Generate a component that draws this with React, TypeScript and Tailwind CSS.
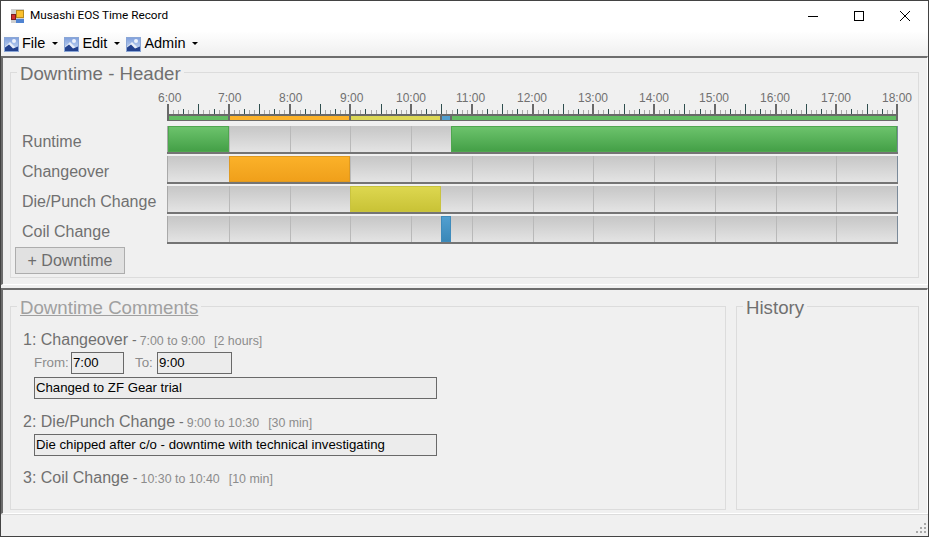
import React from 'react';

const HOUR_WIDTH = 60.75;
const START_HOUR = 6;
const HOURS = [6, 7, 8, 9, 10, 11, 12, 13, 14, 15, 16, 17, 18];
const COIL_END = 10 + 2 / 3;

const xOf = (time: number): number => Math.round((time - START_HOUR) * HOUR_WIDTH);

interface Segment {
  from: number;
  to: number;
  bar: string;
  flat: string;
}

const GREEN = 'bg-gradient-to-b from-[#6cc36c] to-[#44a047] border-[#4fa64f]';
const ORANGE = 'bg-gradient-to-b from-[#fbb129] to-[#f0a01a] border-[#e09a20]';
const YELLOW = 'bg-gradient-to-b from-[#ddd74f] to-[#c9c336] border-[#c9c33f]';
const BLUE = 'bg-gradient-to-b from-[#519fd0] to-[#3a88b8] border-[#3f8bbb]';

const tracks: { label: string; segments: Segment[] }[] = [
  {
    label: 'Runtime',
    segments: [
      { from: 6, to: 7, bar: GREEN, flat: '#62bb62' },
      { from: COIL_END, to: 18, bar: GREEN, flat: '#62bb62' },
    ],
  },
  {
    label: 'Changeover',
    segments: [{ from: 7, to: 9, bar: ORANGE, flat: '#fbb129' }],
  },
  {
    label: 'Die/Punch Change',
    segments: [{ from: 9, to: 10.5, bar: YELLOW, flat: '#dcd755' }],
  },
  {
    label: 'Coil Change',
    segments: [{ from: 10.5, to: COIL_END, bar: BLUE, flat: '#519fd0' }],
  },
];

const MenuIcon = ({ id }: { id: string }): JSX.Element => (
  <svg width="16" height="16" viewBox="0 0 16 16" className="shrink-0">
    <defs>
      <linearGradient id={id} x1="0" y1="0" x2="0" y2="1">
        <stop offset="0" stopColor="#7f9fdc" />
        <stop offset="1" stopColor="#cfdff5" />
      </linearGradient>
    </defs>
    <rect x="1.5" y="1.5" width="14" height="14" fill={`url(#${id})`} stroke="#8aa6d6" />
    <circle cx="11" cy="5" r="2" fill="#eef3fb" />
    <path d="M2 11 L7 6 L15 14 H2 Z" fill="#e8eef8" />
    <path d="M2 15 V11.5 L6 8.5 L10 12.5 L15 10.5 V15 Z" fill="#24438f" />
  </svg>
);

const AppIcon = (): JSX.Element => (
  <svg width="14" height="14" viewBox="0 0 14 14" className="shrink-0">
    <rect x="0" y="0" width="13" height="14" fill="#cfcfcf" />
    <rect x="5.5" y="1.5" width="7" height="7" fill="#fbc02d" stroke="#b98a1c" />
    <rect x="0.5" y="5.5" width="4" height="5" fill="#d32f2f" stroke="#7e1e1e" />
    <rect x="5" y="10" width="8" height="4" fill="#4f83d1" />
  </svg>
);

const Ruler = (): JSX.Element => {
  const ticks = [];
  for (let i = 0; i <= 144; i++) {
    if (i % 12 === 0) continue;
    const x = Math.round((i * HOUR_WIDTH) / 12) + 1.5;
    const half = i % 6 === 0;
    const quarter = i % 3 === 0;
    ticks.push(
      <line
        key={i}
        x1={x}
        x2={x}
        y1={half ? 0 : quarter ? 5 : 6}
        y2={10}
        stroke={half || quarter ? '#2f4f4f' : '#a8a8a8'}
        strokeWidth="1"
      />
    );
  }
  const bars: Segment[] = [
    { from: 6, to: 7, bar: '', flat: '#62bb62' },
    { from: 7, to: 9, bar: '', flat: '#fbb129' },
    { from: 9, to: 10.5, bar: '', flat: '#dcd755' },
    { from: 10.5, to: COIL_END, bar: '', flat: '#519fd0' },
    { from: COIL_END, to: 18, bar: '', flat: '#62bb62' },
  ];
  return (
    <svg width="731" height="17" className="block overflow-visible">
      {ticks}
      <rect x="0" y="10" width="731" height="7" fill="#696969" />
      {bars.map((bar) => (
        <rect
          key={bar.from}
          x={xOf(bar.from) + 2}
          y="12"
          width={xOf(bar.to) - xOf(bar.from) - 2}
          height="4"
          fill={bar.flat}
        />
      ))}
      {HOURS.map((hour) => (
        <rect key={hour} x={xOf(hour)} y="0" width="2" height="10" fill="#696969" />
      ))}
    </svg>
  );
};

const Track = ({ segments }: { segments: Segment[] }): JSX.Element => (
  <div className="relative h-[28px] w-[731px] border-b-2 border-[#747474] bg-gradient-to-b from-[#c6c6c6] to-[#e4e4e4]">
    {HOURS.slice(1, -1).map((hour) => (
      <div
        key={hour}
        className="absolute top-0 bottom-0 w-px bg-[#b9b9b9]"
        style={{ left: xOf(hour) + 1 }}
      />
    ))}
    <div className="absolute top-0 bottom-0 left-0 w-px bg-[#a9a9a9]" />
    <div className="absolute top-0 bottom-0 right-0 w-px bg-[#7a8a9a]" />
    {segments.map((segment) => (
      <div
        key={segment.from}
        className={`absolute top-0 bottom-0 border ${segment.bar}`}
        style={{
          left: xOf(segment.from) + 1,
          width: xOf(segment.to) - xOf(segment.from),
        }}
      />
    ))}
  </div>
);

const Comment = ({
  index,
  name,
  range,
  length,
  children,
}: {
  index: number;
  name: string;
  range: string;
  length: string;
  children?: React.ReactNode;
}): JSX.Element => (
  <div>
    <div className="flex items-baseline h-[21px] text-[16px] text-[#707070]">
      <span className="whitespace-pre">
        {index}: {name}
      </span>
      <span className="ml-[4px] text-[14px]">-</span>
      <span className="ml-[3px] text-[12.4px] text-[#8c8c8c]">{range}</span>
      <span className="ml-[9px] text-[12.4px] text-[#8c8c8c]">{length}</span>
    </div>
    {children}
  </div>
);

const TextBox = ({ value, className }: { value: string; className: string }): JSX.Element => (
  <input
    readOnly
    value={value}
    className={`h-[22px] border border-[#696969] bg-[#ececec] px-px pb-[2px] text-[13.2px] text-black outline-none ${className}`}
  />
);

export default function App(): JSX.Element {
  return (
    <div className="flex flex-col w-[929px] h-[537px] border border-[#434343] bg-[#f0f0f0] font-['Liberation_Sans',sans-serif] overflow-hidden">
      {/* title bar */}
      <div className="flex items-center h-[30px] shrink-0 bg-white pl-[10px]">
        <AppIcon />
        <span className="ml-[5px] text-[11.75px] text-black font-['Roboto',sans-serif]">
          Musashi EOS Time Record
        </span>
        <div className="ml-auto flex items-center">
          <div className="flex items-center justify-center w-[46px] h-[30px]">
            <div className="w-[10px] h-px bg-black" />
          </div>
          <div className="flex items-center justify-center w-[46px] h-[30px]">
            <div className="w-[10px] h-[10px] border border-black" />
          </div>
          <div className="flex items-center justify-center w-[46px] h-[30px]">
            <svg width="10" height="10" viewBox="0 0 10 10">
              <path d="M0 0 L10 10 M10 0 L0 10" stroke="#000" strokeWidth="1" />
            </svg>
          </div>
        </div>
      </div>

      {/* menu bar */}
      <div className="flex items-center h-[25px] shrink-0 bg-gradient-to-b from-white to-[#efefef] pl-[2px] text-[14.5px] text-black">
        {['File', 'Edit', 'Admin'].map((item) => (
          <div key={item} className="flex items-center mr-[3px]">
            <MenuIcon id={`menu-icon-${item}`} />
            <span className="ml-[3px]">{item}</span>
            <span className="ml-[7px] mr-[2px] w-0 h-0 border-x-[3px] border-x-transparent border-t-[3px] border-t-black" />
          </div>
        ))}
      </div>

      {/* downtime header */}
      <div className="h-[229px] shrink-0 border-t-2 border-l-2 border-[#6d6d6d] border-r border-r-white border-b border-b-white pl-[7px] pr-[8px] pt-[3px]">
        <fieldset className="h-[217px] border border-[#dcdcdc] pl-[4px]">
          <legend className="ml-[2px] px-[3px] pt-[2px] text-[18.67px] leading-[21px] text-[#707070]">
            Downtime - Header
          </legend>
          <div className="flex">
            <div className="w-[152px] shrink-0" />
            <div className="relative w-[731px] h-[20px]">
              {HOURS.map((hour) => (
                <span
                  key={hour}
                  className="absolute top-[7px] text-[12px] leading-[14px] text-[#707070]"
                  style={{ left: Math.floor((hour - START_HOUR) * HOUR_WIDTH) - (hour < 10 ? 9 : 14) }}
                >
                  {hour}:00
                </span>
              ))}
            </div>
          </div>
          <div className="flex">
            <div className="w-[152px] shrink-0" />
            <Ruler />
          </div>
          <div className="flex flex-col mt-[5px] gap-[2px]">
            {tracks.map((track) => (
              <div key={track.label} className="flex items-center">
                <span className="w-[152px] shrink-0 pl-[7px] pt-[4px] text-[16px] text-[#707070]">
                  {track.label}
                </span>
                <Track segments={track.segments} />
              </div>
            ))}
          </div>
          <button className="block mt-[3px] w-[110px] h-[27px] border border-[#adadad] bg-[#e1e1e1] text-[16px] text-[#6d6d6d]">
            + Downtime
          </button>
        </fieldset>
      </div>

      <div className="h-[3px] shrink-0" />

      {/* comments and history */}
      <div className="flex gap-[10px] h-[226px] shrink-0 border-t-2 border-l-2 border-[#6d6d6d] border-r border-r-white border-b border-b-white pl-[7px] pr-[8px] pt-[5px]">
        <fieldset className="w-[716px] h-[215px] border border-[#dcdcdc]">
          <legend className="ml-[6px] px-[3px] pt-[2px] text-[18.67px] leading-[21px] text-[#a0a0a0] underline">
            Downtime Comments
          </legend>
          <div className="pl-[12px] pt-[10px]">
            <Comment index={1} name="Changeover" range="7:00 to 9:00" length="[2 hours]">
              <div className="flex items-center mt-[3px] ml-[11px] text-[13.33px] text-[#8c8c8c]">
                <span className="w-[37px]">From:</span>
                <TextBox value="7:00" className="w-[53px]" />
                <span className="ml-[11px] w-[22px]">To:</span>
                <TextBox value="9:00" className="w-[75px]" />
              </div>
              <TextBox value="Changed to ZF Gear trial" className="block mt-[3px] ml-[11px] w-[403px]" />
            </Comment>
            <div className="h-[11px]" />
            <Comment index={2} name="Die/Punch Change" range="9:00 to 10:30" length="[30 min]">
              <TextBox value="Die chipped after c/o - downtime with technical investigating" className="block mt-[3px] ml-[11px] w-[403px]" />
            </Comment>
            <div className="h-[10px]" />
            <Comment index={3} name="Coil Change" range="10:30 to 10:40" length="[10 min]" />
          </div>
        </fieldset>
        <fieldset className="w-[183px] h-[215px] border border-[#dcdcdc]">
          <legend className="ml-[6px] px-[3px] pt-[2px] text-[18.67px] leading-[21px] text-[#707070]">
            History
          </legend>
        </fieldset>
      </div>

      {/* status bar */}
      <div className="relative flex-1 border-t border-[#dcdcdc]">
        <svg width="12" height="12" viewBox="0 0 12 12" className="absolute right-[1px] bottom-[1px]">
          {[
            [9, 0],
            [5, 4],
            [9, 4],
            [1, 8],
            [5, 8],
            [9, 8],
          ].map(([x, y]) => (
            <rect key={`${x}-${y}`} x={x} y={y} width="2" height="2" fill="#a8a8a8" />
          ))}
        </svg>
      </div>
    </div>
  );
}
